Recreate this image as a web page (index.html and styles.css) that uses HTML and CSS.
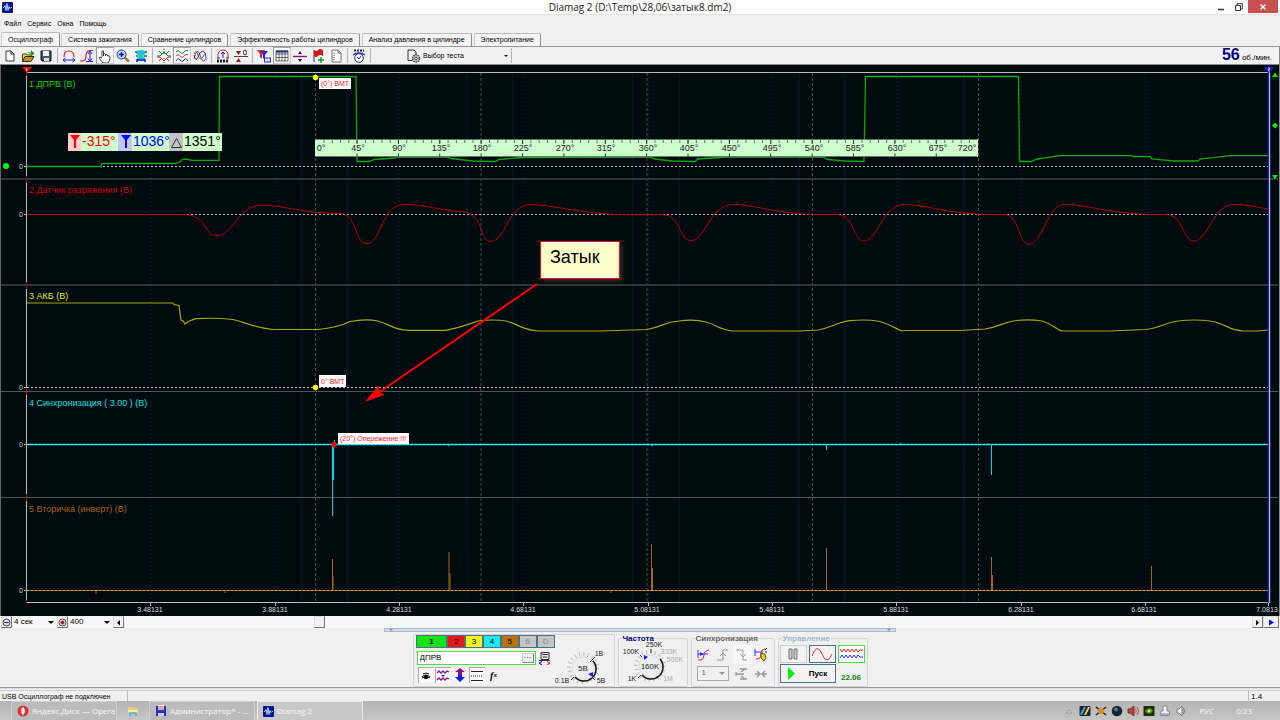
FILE: index.html
```html
<!DOCTYPE html>
<html lang="ru">
<head>
<meta charset="utf-8">
<title>Diamag 2</title>
<link rel="stylesheet" href="styles.css">
</head>
<body>
<header class="titlebar">
  <svg class="app-icon" width="11" height="11" viewBox="0 0 11 11"><rect width="11" height="11" rx="1" fill="#12128c"/><path d="M1 5.500h1l1-2 1 5 1-7 1 7 1-4 1 2 1-1h1" fill="none" stroke="#9cd4ff"/></svg>
  <h1 class="title">Diamag 2 (D:\Temp\28,06\затык8.dm2)</h1>
  <div class="window-buttons">
    <button class="win" aria-label="Свернуть"><svg width="8" height="8"><path d="M1 6.500h6" stroke="#333" stroke-width="1.500"/></svg></button>
    <button class="win" aria-label="Развернуть"><svg width="8" height="8"><path d="M.5 2.500h5v5h-5zM2 2V.7h5.300V6H6" fill="none" stroke="#333"/></svg></button>
    <button class="win close" aria-label="Закрыть"><svg width="8" height="8"><path d="M1.500 1.500l5 5m0-5l-5 5" stroke="#fff" stroke-width="1.300"/></svg></button>
  </div>
</header>
<nav class="menu">
  <button>Файл</button><button>Сервис</button><button>Окна</button><button>Помощь</button>
</nav>
<div class="tabs" role="tablist">
  <button class="tab active" role="tab">Осциллограф</button>
  <button class="tab" role="tab">Система зажигания</button>
  <button class="tab" role="tab">Сравнение цилиндров</button>
  <button class="tab" role="tab">Эффективность работы цилиндров</button>
  <button class="tab" role="tab">Анализ давления в цилиндре</button>
  <button class="tab" role="tab">Электропитание</button>
</div>
<div class="toolbar">
  <button class="tool" aria-label="Новый"><svg viewBox="0 0 14 14"><path d="M3 2h5l3 3v7H3zM8 2v3h3" fill="#fff" stroke="#333"/></svg></button>
  <button class="tool" aria-label="Открыть"><svg viewBox="0 0 14 14"><path d="M1.500 12V5h4l1 1h4v2" fill="#e8d060" stroke="#554400"/><path d="M1.500 12.500l2.500-5h9l-3 5z" fill="#b9962a" stroke="#332a00"/><path d="M6 3.500h4V1l3.500 3.500L10 7.500V5" fill="#129a22"/></svg></button>
  <button class="tool" aria-label="Сохранить"><svg viewBox="0 0 14 14"><path d="M2 2h10v10H3l-1-1z" fill="#445577" stroke="#111"/><path d="M4 2h6v5H4z" fill="#f4f4f4"/><path d="M5 9h5v3H5z" fill="#ddd"/></svg></button>
  <i class="sep"></i>
  <button class="tool" aria-label="Растянуть по ширине"><svg viewBox="0 0 14 14"><path d="M2 8Q2 2 7 2t5 6" fill="none" stroke="#e02020" stroke-width="1.200"/><path d="M1 11h12M3.500 9L1 11l2.500 2M10.500 9l2.500 2-2.500 2" fill="none" stroke="#1c1cf0"/></svg></button>
  <button class="tool" aria-label="Растянуть по высоте"><svg viewBox="0 0 14 14"><path d="M0 12h2Q6 12 6 7t4-5.500h3" fill="none" stroke="#e02020" stroke-width="1.200"/><path d="M10 3v8M8 5l2-3 2 3M8 9.500l2 3 2-3M6 12.500h7" fill="none" stroke="#1c1cf0"/></svg></button>
  <button class="tool pressed" aria-label="Рука"><svg viewBox="0 0 14 14"><path d="M4 8V2q1-1 1.500 0v5V5q1-1 2 0v2-1q1-1 2 0v1q2-1 2.500 1 0 4-2 6H5L1 9q0-2 3 0" fill="#fff" stroke="#333" stroke-width=".9"/></svg></button>
  <button class="tool" aria-label="Масштаб"><svg viewBox="0 0 14 14"><path d="M8.500 8.500l4.500 4" stroke="#a87838" stroke-width="2.500"/><circle cx="5.500" cy="5.500" r="4.500" fill="#b8dcff" stroke="#223880"/><path d="M3 5.500h5M5.500 3v5" stroke="#10107c" stroke-width="1.300"/></svg></button>
  <button class="tool" aria-label="Выделить"><svg viewBox="0 0 14 14"><path d="M1 3q6-4 12 0L9 7l2 2v3H3V9l2-2z" fill="#20c8c8"/><path d="M1 3h2m8 0h2M2 7h2m6 0h3" stroke="#147c38" stroke-width="1.500"/><path d="M3 10v3m8-3v3M3 11h8" stroke="#2020e0" stroke-width="1.500"/></svg></button>
  <i class="sep"></i>
  <button class="tool" aria-label="Совместить"><svg viewBox="0 0 14 14"><path d="M0 7h3l4-4 4 4h3M2 2l3 3m7-3L9 5" fill="none" stroke="#148c30"/><path d="M0 8h3l4 4 4-4h3M2 12l3-3m7 3L9 9" fill="none" stroke="#d02828"/><path d="M7 0v5M7 9v5" stroke="#333" stroke-dasharray="1 1"/></svg></button>
  <button class="tool pressed" aria-label="Раздельно"><svg viewBox="0 0 14 14" fill="none"><path d="M1 3q2-3 4 0t4 0 4-1" stroke="#149a38"/><path d="M1 7q2-3 4 0t4 0 4-1" stroke="#e03030"/><path d="M1 12q2-4 4-1t4 0 4 1" stroke="#3030f0"/></svg></button>
  <button class="tool" aria-label="Вместе"><svg viewBox="0 0 14 14" fill="none"><path d="M1 5q2-5 4 1t4 3 4-5" stroke="#149a38"/><path d="M1 10Q4-3 7 6t5 5" stroke="#e03030"/><path d="M1 6q2 8 4 2t5-6q3 1 3 9" stroke="#3030f0"/></svg></button>
  <i class="sep"></i>
  <button class="tool" aria-label="Авто"><svg viewBox="0 0 14 14"><path d="M2 9Q1 1 7 1t5 8" fill="none" stroke="#e02020"/><path d="M7 3v6M5 5l2-2 2 2M1 9h3M10 9h3" fill="none" stroke="#1c1cf0"/><path d="M1 12h12" stroke="#222" stroke-width="3" stroke-dasharray="2 1"/></svg></button>
  <button class="tool" aria-label="Ноль"><svg viewBox="0 0 14 14"><path d="M0 7.500h14" stroke="#444"/><path d="M2 2h5L4.500 6zM2 13h5L4.500 9z" fill="#a01818"/><ellipse cx="11" cy="3.500" rx="1.500" ry="2.500" fill="none" stroke="#333"/></svg></button>
  <i class="sep"></i>
  <button class="tool" aria-label="Фильтр"><svg viewBox="0 0 14 14"><path d="M0 1h8L5 5v5L3 8V5z" fill="#e02828"/><path d="M4 2h7L8 6v5L6 9V6z" fill="#2828e8"/><rect x="7.500" y="9" width="6" height="4" fill="#d8e4ff" stroke="#2838b0"/></svg></button>
  <button class="tool pressed" aria-label="Таблица"><svg viewBox="0 0 14 14"><path d="M1 2h12v10H1zM1 5h12M1 8.500h12M4 2v10M7 2v10M10 2v10" fill="#fff" stroke="#444" stroke-width=".8"/><path d="M1 2.500h12" stroke="#203080" stroke-width="2"/></svg></button>
  <button class="tool" aria-label="Разделить"><svg viewBox="0 0 14 14"><path d="M0 7.500h14" stroke="#881488" stroke-width="1.400"/><path d="M5 5l2-3 2 3zM5 10h4l-2 3z" fill="#222"/></svg></button>
  <button class="tool" aria-label="Добавить метку"><svg viewBox="0 0 14 14"><path d="M3 1v12" stroke="#333"/><path d="M3 1q3 2 4 0t5 0v6q-3-2-5 0t-4 0z" fill="#d01818"/><path d="M7 11h6M10 8v6" stroke="#149a28" stroke-width="1.500"/></svg></button>
  <button class="tool" aria-label="Отчёт"><svg viewBox="0 0 14 14"><path d="M3 1h6l3 3v9H3zM9 1v3h3" fill="#f8f8f8" stroke="#777"/><path d="M5 4v7" stroke="#555" stroke-dasharray="1 1"/></svg></button>
  <i class="sep"></i>
  <button class="tool" aria-label="Автозамер"><svg viewBox="0 0 14 14"><path d="M2 1.500h10" stroke="#222" stroke-width="2" stroke-dasharray="2 1"/><path d="M1 6q6-4 12 0" fill="none" stroke="#2030e0" stroke-width="1.500"/><circle cx="7" cy="9" r="4.300" fill="#fff" stroke="#333"/><path d="M5 8l2 2 2-3" fill="none" stroke="#2030e0"/></svg></button>
  <i class="sep"></i>
  <button class="test"><svg width="14" height="14" viewBox="0 0 14 14"><path d="M1 1h6l2 2v4M5 11.500H1V1" fill="none" stroke="#333"/><circle cx="9" cy="9.500" r="3.500" fill="#ccc" stroke="#444" stroke-width="1.500" stroke-dasharray="1.500 .7"/><circle cx="9" cy="9.500" r="1.300" fill="#fff" stroke="#444"/></svg><span>Выбор теста</span><b class="caret"></b></button>
  <i class="sep"></i>
  <p class="rpm"><strong>56</strong> об./мин.</p>
</div>

<main class="plot">
<svg class="scope" viewBox="0 65 1279 551">
  <path d="M.5 65V616" stroke="#666"/>
  <g class="band"><path d="M301.500 73V602M347.500 73V602M467 73V602M513 73V602M633 73V602M679 73V602M799 73V602M844.500 73V602M964 73V602"/></g>
  <path class="grid" d="M150.500 73V602M275.500 73V602M399.500 73V602M523.500 73V602M648.500 73V602M772.500 73V602M896.500 73V602M1021.500 73V602M1145.500 73V602"/>
  <path class="degree" d="M315.500 73V602M481 73V602M647 73V602M812.500 73V602M978.500 73V602"/>
  <path class="divider thick" d="M1 179H1278M1 285H1278"/>
  <path class="divider" d="M1 391.500H1278M1 497.500H1278"/>
  <path class="zero" d="M27 166.500H1268M27 214.500H1268M27 387.500H1268"/>
  <path class="frame" d="M26.500 602.500V72.500H1268M26.500 602.500H1268M24 166.500h3M24 214.500h3M24 387.500h3M24 444.500h3M24 590.500h3M150.500 603v3M275.500 603v3M399.500 603v3M523.500 603v3M648.500 603v3M772.500 603v3M896.500 603v3M1021.500 603v3M1145.500 603v3M1268.500 603v3"/>
  <path class="joint" d="M26.500 72v4M26.500 176v7M26.500 282v7M26.500 388v7M26.500 494v7M26.500 600v3"/>
  <path class="trace green" d="M27 166.500H101L102 163.500H175L180 162 182 159.500 186 159 192 160.300H219L219.500 76.500H356L357 161.500H370L374 159.500 395 158 397 157H448L451 158.500 473 161 495 161.500 499 159.500 522 157.500 650 157 655 159 672 161 695 161.500 698 159 727 157H823L828 159.500 845 161 864 161.500 865.500 76.500H1018.500L1019.500 161.500H1031L1037 159 1060 155.600H1132L1133 156.500H1150L1152 159 1174 161H1198L1200 159 1230 155.600H1268"/>
  <path class="trace red" d="M27 214.500H183C209 215 203 235.500 217 235.500C235 235.500 236 205 263 205.300C283 205.500 300 212 330 213.300H340C358 214 354 243.700 367 243.700C381 243.700 381 204.500 405 204.300C422 204.300 445 211 460 211.500C486 212 477 241.300 491 241.300C505 241.300 508 204.500 531 204.500C548 204.500 590 214.700 623 214.700H662C682 214.700 678 240.500 691 240.500C706 240.500 709 204.400 734 204.400C752 204.400 780 214.500 820 214.500H836C856 214.500 852 241 864 241C878 241 882 204.400 905 204.400C924 204.400 950 214.500 990 214.500H1004C1020 214.500 1018 244.300 1029 244.300C1043 244.300 1047 204.200 1065 204.200C1083 204.200 1115 214.500 1155 214.500H1166C1184 214.500 1182 241 1194 241C1208 241 1213 204.400 1234 204.400C1246 204.400 1255 207 1268 209"/>
  <path class="trace yellow" d="M27 303H173L174 304.500 179 305.500 181 320 183 321 185 324 188 321.500 196 318.700Q215 317.500 233 319.500C246 322 250 327 273 329.500H318C334 328 341 326 350 321.500Q366 318.500 378 321C390 324 393 330 408 330.300H446C462 327 466 325 478 321Q494 319 506 321C518 324 522 330 538 331H600L647 329.500C662 327 664 322 679 321Q694 319 706 322C717 325 720 330 733 331H800L818 330C833 327 838 322 850 320.700Q866 319 880 321.500C892 325 898 330 902 331L905 330.500H960L985 329C999 327 1003 322 1016 320.500Q1030 319 1042 321C1053 324 1057 330 1062 331H1110L1145 329.500C1161 328 1166 322 1178 321Q1195 319 1210 321C1225 323 1228 330 1243 331H1257L1268 330"/>
  <path class="trace cyan line" d="M27 444.500H1268"/><path class="zero over" d="M27 444.500H1268"/>
  <path class="trace cyan" d="M332.500 444V516M333.500 444V480M334.500 440v5M826.500 444v6M991.500 444v31M449 445v1.500M652 445v1.500M901 443v2"/>
  <path class="trace brown" d="M27 590.500H1268"/><path class="zero over" d="M27 590.500H1268"/>
  <path class="trace brown" d="M332.500 590V559M333 590V576M449 590V552M450 590V573M651.500 590V544M652.500 590V568M826.500 590V548M991.500 590V557M992.500 590V575M1151.500 590V566M96 591v3M225 591v2M611 591v2"/>
  <g class="channel">
    <text x="29" y="87" fill="#00d000">1 ДПРВ (В)</text>
    <text x="29" y="193" fill="#d00000">2 Датчик разряжения (В)</text>
    <text x="29" y="299" fill="#e8e800">3 АКБ (В)</text>
    <text x="29" y="406" fill="#00e0e0">4 Синхронизация ( 3.00 ) (В)</text>
    <text x="29" y="512" fill="#a86008">5 Вторичка (инверт) (В)</text>
  </g>
  <g class="axis">
    <text x="21" y="169">0</text><text x="21" y="217">0</text><text x="21" y="390">0</text><text x="21" y="447">0</text><text x="21" y="593">0</text>
    <text x="150" y="612">3.48131</text><text x="275" y="612">3.88131</text><text x="399" y="612">4.28131</text><text x="523" y="612">4.68131</text><text x="647" y="612">5.08131</text><text x="772" y="612">5.48131</text><text x="896" y="612">5.88131</text><text x="1021" y="612">6.28131</text><text x="1144" y="612">6.68131</text><text x="1267" y="612">7.0813</text>
  </g>
  <g class="ruler">
    <rect x="315" y="139" width="663" height="18"/>
    <path d="M315 139.500H977M315 156.500H977" stroke="#667866"/>
    <path d="M323.500 141.500H977" stroke="#667866" stroke-width="3" stroke-dasharray="1 7.275"/>
    <path d="M356.500 142H977" stroke="#333" stroke-width="4" stroke-dasharray="1 40.375"/>
    <path d="M356.500 155H977" stroke="#333" stroke-width="3" stroke-dasharray="1 40.375"/>
    <text x="321" y="151">0°</text><text x="358" y="151">45°</text><text x="399" y="151">90°</text><text x="441" y="151">135°</text><text x="482" y="151">180°</text><text x="523" y="151">225°</text><text x="565" y="151">270°</text><text x="606" y="151">315°</text><text x="648" y="151">360°</text><text x="689" y="151">405°</text><text x="731" y="151">450°</text><text x="772" y="151">495°</text><text x="814" y="151">540°</text><text x="855" y="151">585°</text><text x="897" y="151">630°</text><text x="938" y="151">675°</text><text x="967" y="151">720°</text>
  </g>
  <g class="readout">
    <rect x="68" y="133" width="154" height="18" fill="#ccffcc"/><rect x="68" y="133" width="13" height="18" fill="#ffcccc"/><rect x="118" y="133" width="14" height="18" fill="#c4c4ff"/><rect x="169" y="133" width="14" height="18" fill="#c4c4c4"/>
    <path d="M70 135h10l-4 5v8h-2v-8z" fill="#f00"/><path d="M121 135h10l-4 5v8h-2v-8z" fill="#00f"/><path d="M171.500 147.500l5-9 5 9z" fill="none" stroke="#333"/>
    <text x="82" y="146" fill="#f00">-315°</text><text x="133" y="146" fill="#00f">1036°</text><text x="184" y="146">1351°</text>
  </g>
  <g class="mark">
    <rect x="319" y="78" width="32" height="11"/><text x="321" y="86">(0°) ВМТ</text>
    <rect x="319" y="375" width="27" height="12"/><text x="321" y="384">0° ВМТ</text>
    <rect x="338" y="433" width="71" height="11"/><text x="340" y="441">(20°) Опережение !!!</text>
  </g>
  <circle cx="315.500" cy="77.500" r="2.700" fill="#ff0"/><circle cx="315.500" cy="387.500" r="2.700" fill="#ff0"/><circle cx="334" cy="444.500" r="2.700" fill="#f00"/><circle cx="6" cy="166" r="3" fill="#0f0"/>
  <path d="M22 67h10l-5 6z" fill="#f00"/><path d="M26.500 68v3" stroke="#fff"/>
  <path d="M1268.500 72V603" stroke="#2020d8" stroke-width="1.500"/><path d="M1269.700 72V603" stroke="#dde"/>
  <path d="M1264 67h10l-5 6z" fill="#1818ff"/><path d="M1268 68h1.500v1.500h-1v1.500h1.500" stroke="#fff" fill="none" stroke-width=".7"/>
  <path d="M1272 77h6l-3-4.500zM1272 175h6l-3 4.500zM1275 122.500l3 3-3 3-3-3z" fill="#0e0"/>
  <path d="M537 284L378 393" stroke="#f00" stroke-width="2"/><path d="M366 401l12.500-15 .5 6.500 5 2z" fill="#f00" stroke="#f00"/>
  <g class="callout"><rect x="540.500" y="241.500" width="79" height="37"/><text x="550" y="263">Затык</text></g>
</svg>
</main>

<div class="scroll-row">
  <button class="mini" aria-label="Уменьшить развёртку"><svg width="9" height="9"><circle cx="4.500" cy="4.500" r="3.500" fill="#dde" stroke="#444"/><path d="M2.500 4.500h4" stroke="#10108c"/></svg></button>
  <label class="drop"><select aria-label="Развёртка"><option>4 сек</option></select></label>
  <button class="mini" aria-label="Увеличить частоту"><svg width="9" height="9"><circle cx="4.500" cy="4.500" r="3.500" fill="#fff" stroke="#444"/><path d="M2.500 4.500h4M4.500 2.500v4" stroke="#a01010" stroke-width="2"/></svg></button>
  <label class="drop"><select aria-label="Точек"><option>400</option></select></label>
  <button class="mini" aria-label="Влево"><svg width="9" height="9"><path d="M6 2v5.500L3 4.700z"/></svg></button>
  <input class="scroll" type="range" min="0" max="100" value="17" aria-label="Прокрутка">
  <button class="mini" aria-label="Вправо"><svg width="9" height="9"><path d="M3 2v5.500l3-2.800z"/></svg></button>
  <button class="mini wide" aria-label="В конец"><svg width="9" height="9"><path d="M2 1.500v6l5-3z" fill="#00f"/></svg></button>
</div>

<section class="panel">
  <div class="splitter"><b></b><b></b></div>
  <div class="groups">
    <section class="group channels">
      <div class="left">
        <div class="numbers"><button class="n1">1</button><button class="n2">2</button><button class="n3">3</button><button class="n4">4</button><button class="n5">5</button><button disabled>6</button><button disabled>D</button></div>
        <div class="name-row"><div class="name"><input value="ДПРВ" aria-label="Имя канала"><button aria-label="Выбрать датчик">···</button></div>
          <svg width="13" height="13"><path d="M3 .5h8v7H3zM4 2.500h6M5 5h4M1 8.500h11" fill="#e8eee8" stroke="#333"/><path d="M4 9.500L1 11l3 2" fill="none" stroke="#00f"/><path d="M9 9.500l3 1.500-3 2" fill="none" stroke="#f00"/></svg></div>
        <div class="options">
          <button class="pressed" aria-label="Видимость"><svg width="14" height="14"><path d="M3 8q4-4 8 0-4 3-8 0zM4 5q3-2 6 0" fill="#aaa" stroke="#222"/><circle cx="7" cy="8" r="2" /></svg></button>
          <button class="pressed" aria-label="Инверсия"><svg width="14" height="14"><path d="M1 4l2-2 2 2 2-2 2 2 2-2 2 1M1 11l2-2 2 2 2-2 2 2 2-2 2 1" fill="none" stroke="#8a1090" stroke-width="1.300"/><path d="M5 6h4L7 8z" fill="#333"/></svg></button>
          <button aria-label="Смещение"><svg width="14" height="14"><path d="M7 0l5 4H9v3H5V4H2z" fill="#8a1090"/><path d="M5 7h4v2h3l-5 5-5-5h3z" fill="#1818f0"/></svg></button>
          <button class="pressed" aria-label="Линии"><svg width="14" height="14"><path d="M1 2.500h12M1 11.500h12" stroke="#222"/><path d="M1 7h12" stroke="#222" stroke-dasharray="1 1"/></svg></button>
          <button class="fx" aria-label="Функция">f<small>x</small></button>
        </div>
      </div>
      <svg class="dial" width="56" height="46" viewBox="554 640 56 46">
        <circle cx="582" cy="668" r="14" fill="none" stroke="#bbb" stroke-width="4" stroke-dasharray="1 3.400"/>
        <circle cx="582" cy="668" r="11" fill="#eee" stroke="#ddd"/><path d="M592 661a12 12 0 0 1-18 16" fill="none" stroke="#111" stroke-width="1.500"/><path d="M589 662l5-5M591 677l3 3M573 677l-3 3" stroke="#333"/><path d="M587 674l5-2v5z" fill="#1818f0"/>
        <text x="582" y="671" class="val">5В</text><text x="598" y="656">1В</text><text x="600" y="683">5В</text><text x="561" y="683">0.1В</text>
      </svg>
    </section>
    <fieldset class="group freq"><legend>Частота</legend>
      <svg class="dial" width="66" height="43" viewBox="621 643 66 43">
        <circle cx="652" cy="668" r="14" fill="none" stroke="#bbb" stroke-width="4" stroke-dasharray="1 3.400"/>
        <circle cx="652" cy="668" r="11" fill="#eee" stroke="#ddd"/><path d="M662 661a12 12 0 0 1-18 16" fill="none" stroke="#111" stroke-width="1.500"/><path d="M653 651v4M643 677l-3 3M642 657l2 2" stroke="#333"/><path d="M646 657l4 2-4 3z" fill="#1818f0"/>
        <text x="652" y="671" class="val">160K</text><text x="656" y="649">250K</text><text x="633" y="656">100K</text><text x="634" y="683">1K</text><text x="671" y="656" class="dim">333K</text><text x="677" y="664" class="dim">500K</text><text x="670" y="683" class="dim">1M</text>
      </svg>
    </fieldset>
    <fieldset class="group sync"><legend>Синхронизация</legend>
      <div class="sync-grid">
        <button aria-label="Авто"><svg width="14" height="14"><path d="M1 12h3Q7 11 7 7t5-5" fill="none" stroke="#e02020"/><path d="M1 2v8M1 6h10" stroke="#3030f0"/><path d="M3 4l4 2-4 2z" fill="#3030f0"/></svg></button>
        <button aria-label="Фронт"><svg width="14" height="14"><path d="M1 12h6V2h5M4 8l3-3 3 3" fill="none" stroke="#999"/></svg></button>
        <button class="lit" aria-label="Спад"><svg width="14" height="14"><path d="M1 2h7v10h4M5 6l3 3 3-3" fill="none" stroke="#999"/></svg></button>
        <button aria-label="Ждущий"><svg width="14" height="14"><path d="M1 1v7M1 4h8" stroke="#3030f0"/><path d="M2 11q5 0 5-5t5-5" fill="none" stroke="#e02020"/><path d="M7 5l4 1 1 4-2 3-3-3z" fill="#e8d000" stroke="#333" stroke-width=".8"/><path d="M11 2l2-2M11 4h2" stroke="#111"/></svg></button>
        <label class="drop src"><select aria-label="Канал синхронизации" disabled><option>1</option></select></label>
        <button aria-label="Уровень"><svg width="14" height="14"><path d="M1 7h8M5 2h7M5 12h7M10 2l-4 3M10 12L6 9M1 5v4" fill="none" stroke="#999" stroke-width="1.300"/></svg></button>
        <button aria-label="Центр"><svg width="14" height="14"><path d="M1 7h4M13 7H9M3 4l3 3-3 3M11 4L8 7l3 3" fill="none" stroke="#999" stroke-width="1.500"/></svg></button>
      </div>
    </fieldset>
    <fieldset class="group control"><legend>Управление</legend>
      <div class="control-grid">
        <button class="flat" disabled aria-label="Пауза"><svg width="10" height="12"><path d="M1 1h3v10H1zM6 1h3v10H6z" fill="#ccc" stroke="#777"/></svg></button>
        <button aria-label="Сигнал"><svg width="22" height="14"><path d="M1 9Q6-5 11 7t10 0" fill="none" stroke="#e83030"/></svg></button>
        <button class="on" aria-label="Потоки"><svg width="24" height="14"><path d="M1 2l2 3 2-3 2 3 2-3 2 3 2-3 2 3 2-3 2 3 2-2h3" fill="none" stroke="#e02020"/><path d="M1 11l2-3 2 3 2-3 2 3 2-3 2 3 2-3 2 3 2-3 2 2h3" fill="none" stroke="#3030f0"/></svg></button>
        <button class="start"><svg width="8" height="13"><path d="M0 0l7 6.500L0 13z" fill="#0e1"/></svg><span>Пуск</span></button>
        <output>22.06</output>
      </div>
    </fieldset>
  </div>
</section>

<footer class="status"><span class="message">USB Осциллограф не подключен</span><span class="mid"></span><span class="ver">1.4</span></footer>

<footer class="taskbar">
  <button class="task"><svg width="12" height="12"><circle cx="6" cy="6" r="5.500" fill="#e03038"/><ellipse cx="6" cy="6" rx="1.700" ry="3.700" fill="#fff"/></svg><span>Яндекс.Диск — Opera</span></button>
  <button class="pin" aria-label="Проводник"><svg width="12" height="12"><path d="M1 2h4l1 1h5v6H1z" fill="#e8d070"/><path d="M1 5h10v2H1z" fill="#f8eca8"/><path d="M2 11V8q4-2 8 0v3H8V9H4v2z" fill="#58b4e0"/></svg></button>
  <button class="task"><svg width="12" height="12"><path d="M1 1h10v10H1z" fill="#2434b8"/><path d="M3 0h6v5H3z" fill="#fff"/><path d="M3 2h6M3 4h6" stroke="#d04040"/><path d="M3 8h6v3H3z" fill="#ccd"/></svg><span>Администратор^ - ...</span></button>
  <button class="task current"><svg width="11" height="11" viewBox="0 0 11 11"><rect width="11" height="11" rx="1" fill="#12128c"/><path d="M1 5.500h1l1-2 1 5 1-7 1 7 1-4 1 2 1-1h1" fill="none" stroke="#9cd4ff"/></svg><span>Diamag 2</span></button>
  <div class="tray">
    <svg width="12" height="12"><path d="M3.500 8l2.500-3 2.500 3z" fill="#eee" stroke="#777" stroke-width=".7"/></svg>
    <svg width="12" height="12"><rect x=".5" y="1" width="11" height="10" rx="1" fill="#223"/><path d="M1 9l4-7h2L3 10z" fill="#38a8e8"/><path d="M5 10l4-8h2L7 10z" fill="#f0e030"/></svg>
    <svg width="12" height="12"><path d="M1 2l10 8M11 2L1 10" stroke="#222" stroke-width="1.500"/><circle cx="6" cy="6" r="3" fill="#d89020"/></svg>
    <svg width="12" height="12"><circle cx="6" cy="6" r="5.300" fill="#182430"/><circle cx="5" cy="4.500" r="2" fill="#50788c"/></svg>
    <svg width="12" height="12"><path d="M1 4h2l4-3v10L3 8H1z" fill="#b84030" stroke="#733"/><path d="M8.500 4q1.500 2 0 4M10 2q3 4 0 8" fill="none" stroke="#a55"/></svg>
    <svg width="12" height="12"><rect x=".5" y="1" width="11" height="10" fill="#1d2a14"/><path d="M2 6q4-5 8-1-2 5-6 3" fill="#5fa010"/><circle cx="6" cy="6" r="1.300" fill="#cde8a0"/></svg>
    <svg width="12" height="12"><path d="M4 1h4v5h2l1 3H1l1-3h2z" fill="#eee" stroke="#888"/><path d="M1 10q5 2 10 0" fill="none" stroke="#7088d0"/></svg>
    <svg width="12" height="12"><path d="M2 4h2l3-3v10L4 8H2z" fill="#f4f4f4" stroke="#777"/><path d="M8.500 3q2 3 0 6" fill="none" stroke="#777"/></svg>
    <span class="lang">РУС</span><time>0:23</time>
  </div>
</footer>
</body>
</html>
```

FILE: styles.css
```css
* { box-sizing: border-box; }
body {
  margin: 0;
  min-height: 100vh;
  display: flex;
  flex-direction: column;
  background: #f0f0f0;
  color: #000;
  font: 7px/10px "Liberation Sans", Arial, sans-serif;
}
button, input, select { font: inherit; color: inherit; margin: 0; padding: 0; border: 0; border-radius: 0; background: none; }
button { display: flex; align-items: center; justify-content: center; white-space: nowrap; }
h1, p { margin: 0; }
svg { display: block; flex: none; }

.titlebar { display: grid; grid-template-columns: 1fr auto 1fr; height: 15px; background: #fcfcfc; border-bottom: 1px solid #e2e2e2; }
.app-icon { margin: 2px; }
.title { font: 10px/15px "Open Sans", sans-serif; color: #222; }
.window-buttons { display: flex; justify-content: flex-end; padding-right: 2px; }
.win { width: 18px; height: 13px; }
.win.close { width: 30px; background: #c75050; }

.menu { display: flex; gap: 6px; padding: 0 4px; height: 17px; }

.tabs { display: flex; align-items: flex-end; gap: 2px; height: 14px; padding-left: 1px; }
.tab { height: 13px; padding: 0 6px; background: #f3f3f3; border: 1px solid #8c8c8c; border-bottom: 0; border-top-color: #bbb; border-left-color: #ccc; border-radius: 2px 2px 0 0; }
.tab.active { height: 14px; background: #f6f6f6; margin-right: -1px; }

.toolbar { display: flex; align-items: center; height: 19px; padding-left: 1px; background: #f1f1f1; border-top: 1px solid #999; border-right: 1px solid #888; border-bottom: 1px solid #888; }
.tool { width: 18px; height: 17px; }
.tool svg { width: 14px; height: 14px; }
.tool.pressed { background: #f8f8f8; border: 1px solid #ccc; border-left-color: #999; border-top-color: #aaa; }
.sep { width: 1px; height: 15px; margin: 0 2px; background: #b4b4b4; }
.test { width: 136px; padding-left: 34px; justify-content: flex-start; gap: 2px; }
.caret { margin-left: auto; margin-right: 1px; border: 2px solid transparent; border-top-color: #111; border-bottom: 0; }
.rpm { margin-left: auto; padding-right: 7px; font-size: 8px; line-height: 17px; }
.rpm strong { font-size: 16px; color: #000080; }

.plot { background: #000b0f; border-right: 1px solid #888; }
.scope { width: 100%; height: auto; }
.band path { stroke: #00161c; stroke-width: 2; }
.grid { stroke: #12292e; stroke-dasharray: 1 3; }
.degree { stroke: #4c4c4c; stroke-dasharray: 3 2; }
.divider { stroke: #555; }
.divider.thick { stroke: #303436; stroke-width: 2; }
.zero { stroke: #c4c4c4; stroke-dasharray: 2 2; }
.zero.over { stroke: #fff; opacity: .4; }
.frame { fill: none; stroke: #bbb; }
.joint { stroke: #b00000; }
.trace { fill: none; }
.green { stroke: #00aa00; stroke-width: 1.3; }
.red { stroke: #b40000; }
.yellow { stroke: #a8a800; stroke-width: 1.2; }
.cyan { stroke: #00d4d8; }
.cyan.line { stroke: #00e4e8; stroke-width: 1.4; }
.brown { stroke: #a86810; }
.channel text { font-size: 9px; }
.axis text { font-size: 7px; fill: #ddd; text-anchor: middle; }
.ruler rect { fill: #ccffcc; }
.ruler text { font-size: 9px; fill: #222; text-anchor: middle; }
.readout text { font-size: 14px; }
.mark rect { fill: #fff; }
.mark text { font-size: 7px; fill: #ff2020; }
.callout rect { fill: #ffffcc; stroke: #f00; filter: drop-shadow(2px 2px 2px #333); }
.callout text { font-size: 18px; }

.scroll-row { display: flex; height: 12px; padding: 0 1px; background: #f8f8f8; font-size: 8px; }
.mini { width: 11px; height: 12px; background: #f2f2f2; border: 1px solid #ddd; border-right-color: #777; border-bottom-color: #777; flex: none; }
.mini.wide { width: 16px; }
.drop { position: relative; width: 45px; }
.drop select { width: 100%; height: 12px; padding-left: 2px; appearance: none; }
.drop::after { content: ""; position: absolute; right: 3px; top: 5px; border: 3px solid transparent; border-top-color: #111; border-bottom: 0; }
.scroll { flex: 1; min-width: 0; height: 12px; appearance: none; background: #f8f8f8; }
.scroll::-webkit-slider-thumb { appearance: none; width: 11px; height: 12px; background: #f0f0f0; border: 1px solid #ddd; border-right-color: #777; border-bottom-color: #777; }

.panel { flex: 1; display: flex; flex-direction: column; align-items: center; border-bottom: 1px solid #999; font-size: 8px; }
.splitter { width: 40%; height: 4px; display: flex; justify-content: space-between; padding: 0 4px; background: #cfe2f4; border: 1px solid #b4b8bc; }
.splitter b { border: 2px solid transparent; border-top-color: #3b96e8; border-bottom: 0; }
.groups { display: flex; gap: 3px; padding-top: 2px; }
.group { height: 53px; margin: 0; padding: 0; min-width: 0; border: 1px solid #d4d4d4; border-radius: 2px; }
legend { margin-left: 3px; padding: 0 1px; font: bold 8px/9px "Liberation Sans", Arial, sans-serif; color: #666; }
.channels { width: 202px; display: flex; padding-left: 2px; }
.left { width: 139px; }
.numbers { display: flex; }
.numbers button { width: 18px; height: 13px; border: 1px solid #4d7089; background: #c4c4c4; }
.numbers button:disabled { color: #888; }
.numbers .n1 { width: 32px; background: #13e413; font-weight: bold; }
.numbers .n2 { background: #e81818; }
.numbers .n3 { background: #f4f41c; }
.numbers .n4 { background: #1ce8f0; }
.numbers .n5 { background: #b87408; }
.name-row { display: flex; gap: 2px; margin-top: 3px; align-items: center; }
.name { display: flex; width: 119px; height: 14px; background: #fff; border: 1px solid #44e444; margin-left: 1px; }
.name input { flex: 1; min-width: 0; padding-left: 2px; }
.name button { width: 12px; margin: 1px; background: #eee; border: 1px solid #ccc; border-right-color: #888; border-bottom-color: #888; }
.options { display: flex; gap: 1px; margin-top: 2px; padding-left: 2px; }
.options button { width: 16px; height: 16px; }
.options .pressed { background: #f8f8f8; border-left: 1px solid #aaa; border-top: 1px solid #aaa; }
.options .fx { font: italic bold 10px "Liberation Serif", serif; }
.fx small { font-size: 7px; }
.dial text { font-size: 7px; text-anchor: middle; fill: #222; }
.dial .val { font-size: 8px; }
.dial .dim { fill: #aaa; }
.channels .dial { margin-top: 5px; }
.freq { width: 70px; }
.freq legend { color: #000080; }
.freq .dial { margin-top: -2px; }
.sync { width: 84px; }
.sync-grid { display: grid; grid-template-columns: repeat(4, 19px); grid-auto-rows: 19px; margin-top: 2px; padding-left: 3px; }
.sync .lit { background: #f8f8f8; }
.sync .src { grid-column: span 2; width: 32px; height: 15px; margin: 2px; border: 1px solid #aaa; color: #555; }
.src select { opacity: 1; padding-left: 4px; }
.src::after { border-top-color: #999; }
.control { width: 90px; }
.control legend { color: #9cb8d4; }
.control-grid { display: grid; grid-template-columns: repeat(3, 27px); grid-template-rows: 18px 19px; gap: 1px 2px; margin-top: 2px; padding-left: 1px; }
.control-grid button { background: #f2f2f2; border: 1px solid #4d7089; }
.control-grid .flat { border-color: #ccc; }
.control-grid .on { border-color: #44e444; background: #fff; }
.control-grid .start { grid-column: span 2; gap: 13px; font-weight: bold; }
.control-grid output { align-self: end; text-align: center; font: bold 8px/11px "Liberation Sans", Arial, sans-serif; color: #0a800a; }

.status { display: flex; height: 13px; align-items: stretch; line-height: 12px; padding-top: 1px; border-top: 1px solid #ddd; }
.status span { padding-left: 2px; border-left: 1px solid #bbb; border-top: 1px solid #ccc; }
.status .message { width: 127px; border-left: 0; }
.status .mid { flex: 1; }
.status .ver { width: 32px; font-size: 8px; }

.taskbar { display: flex; align-items: stretch; gap: 2px; height: 20px; padding-left: 11px; background: linear-gradient(#b4b4b4, #c6c6c6); color: #f8f8f8; font: 8px/12px "Open Sans", sans-serif; }
.task { width: 106px; justify-content: flex-start; gap: 3px; padding-left: 5px; border: 1px solid #d0d0d0; background: #bbb; }
.task.current { background: #c8c8c8; border-color: #eee; }
.pin { width: 28px; }
.tray { display: flex; align-items: center; gap: 4px; margin-left: auto; padding-right: 28px; }
.lang { margin-left: 8px; }
.tray time { margin-left: 18px; }
```
